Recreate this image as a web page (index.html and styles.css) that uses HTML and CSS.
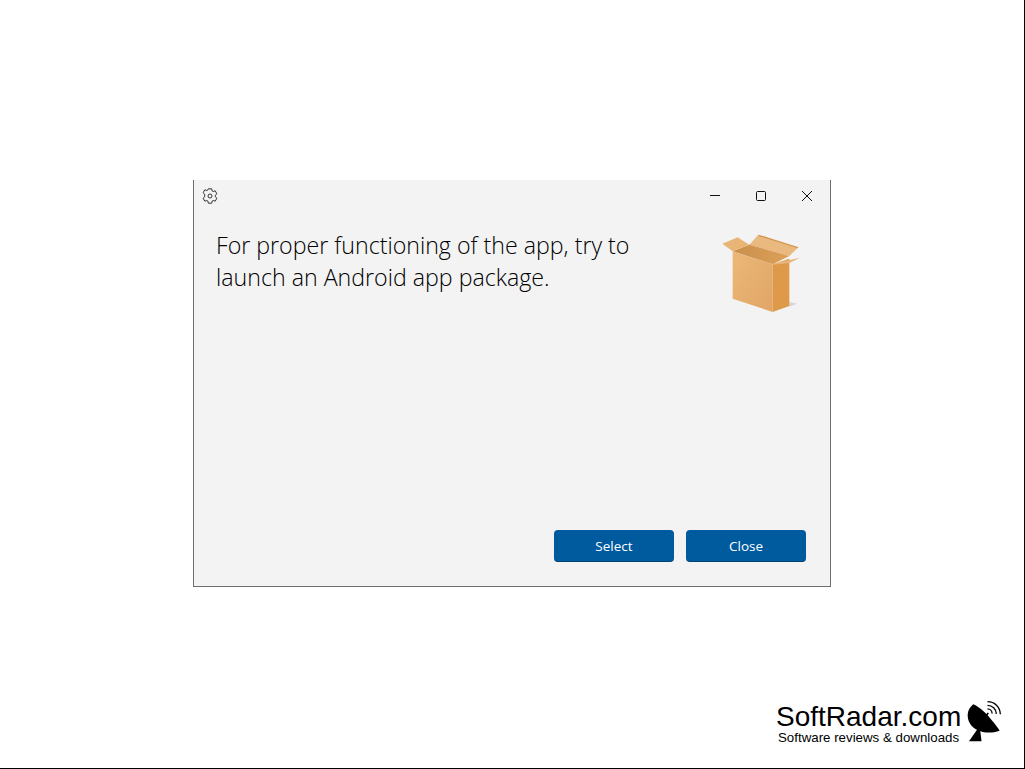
FILE: index.html
```html
<!DOCTYPE html>
<html lang="en">
<head>
    <meta charset="UTF-8">
    <meta name="viewport" content="width=device-width, initial-scale=1.0">
    <title>Android app package</title>
    <link rel="stylesheet" href="styles.css">
</head>
<body>

    <main class="screen">

        <section class="dialog">
            <div class="titlebar">
                <button type="button" class="icon-btn settings" aria-label="Settings">
                    <svg width="16" height="16" viewBox="0 0 16 16" fill="none" stroke="#333" stroke-width="1">
                        <circle cx="8" cy="8" r="2"/>
                        <path d="M6.300 .8h3.400l.4 2.100 1.100.6 2-.7 1.700 3-1.600 1.400v1.600l1.600 1.400-1.700 3-2-.7-1.100.6-.4 2.100H6.300l-.4-2.100-1.100-.6-2 .7-1.700-3 1.600-1.400V6.200L1.100 4.800l1.700-3 2 .7 1.100-.6z"/>
                    </svg>
                </button>
                <div class="window-controls">
                    <button type="button" class="icon-btn" aria-label="Minimize">
                        <svg width="12" height="12" viewBox="0 0 12 12" stroke="#111" stroke-width="1"><path d="M1 5.500h10"/></svg>
                    </button>
                    <button type="button" class="icon-btn" aria-label="Maximize">
                        <svg width="12" height="12" viewBox="0 0 12 12" fill="none" stroke="#111" stroke-width="1"><rect x="1.500" y="1.500" width="9" height="9" rx="1"/></svg>
                    </button>
                    <button type="button" class="icon-btn" aria-label="Close">
                        <svg width="12" height="12" viewBox="0 0 12 12" stroke="#111" stroke-width="1"><path d="M1 1l10 10M11 1L1 11"/></svg>
                    </button>
                </div>
            </div>

            <div class="content">
                <p class="message">For proper functioning of the app, try to launch an Android app package.</p>
                <svg class="box" width="84" height="84" viewBox="90 170 252 252">
                    <defs>
                        <linearGradient id="boxFront" x1="0" y1="0" x2="1" y2="1">
                            <stop offset="0" stop-color="#ecb878"/>
                            <stop offset="1" stop-color="#e0a566"/>
                        </linearGradient>
                        <linearGradient id="boxInside" x1="0" y1="0" x2="1" y2="0">
                            <stop offset="0" stop-color="#c98f4c"/>
                            <stop offset="1" stop-color="#dda058"/>
                        </linearGradient>
                    </defs>
                    <path d="M298 380l24 5-24 9z" fill="#d8d8d8"/>
                    <path d="M205 178l120 38-27 26-120-34z" fill="#e9b97f"/>
                    <path d="M205 178l120 38-1 3-118-37z" fill="#d0954f"/>
                    <path d="M128 228l50-20 120 34-50 25z" fill="url(#boxInside)"/>
                    <path d="M97 205l46-19 35 22-50 20z" fill="#e8b577"/>
                    <path d="M128 228l120 39v143l-120-40z" fill="url(#boxFront)"/>
                    <path d="M248 267l50-17v142l-50 18z" fill="#df9a49"/>
                    <path d="M248 265l82-18-32 16-50 5z" fill="#e8b67c"/>
                </svg>
            </div>

            <div class="actions">
                <button type="button" class="action-btn">Select</button>
                <button type="button" class="action-btn">Close</button>
            </div>
        </section>

        <footer class="brand">
            <div class="brand-text">
                <div class="brand-name">SoftRadar.com</div>
                <div class="brand-tag">Software reviews &amp; downloads</div>
            </div>
            <svg class="dish" width="38" height="43" viewBox="600 15 115 130">
                <path d="M625 28c-18 14-22 38-10 58 13 22 50 36 90 22-6-10-14-20-24-32-16-20-34-38-56-48z" fill="#000"/>
                <path d="M640 100l-28 40h38l-4-32z" fill="#000"/>
                <path d="M660 72l10-18" stroke="#000" stroke-width="5"/>
                <g fill="none" stroke="#000" stroke-width="4">
                    <path d="M668 42c8 0 14 6 14 14"/>
                    <path d="M668 31c15 0 26 11 27 26"/>
                    <path d="M668 20c22 0 38 16 39 38"/>
                </g>
            </svg>
        </footer>

    </main>

</body>
</html>
```

FILE: styles.css
```css
html, body {
    margin: 0;
    padding: 0;
    background-color: #fff;
}

.screen {
    width: 1025px;
    height: 769px;
    box-sizing: border-box;
    border-right: 1px solid #000;
    border-bottom: 1px solid #000;
    padding-top: 180px;
    display: flex;
    flex-direction: column;
    overflow: hidden;
}

.dialog {
    width: 638px;
    height: 407px;
    margin-left: 193px;
    box-sizing: border-box;
    background-color: #f3f3f3;
    border: 1px solid #6e6e6e;
    border-top: none;
    display: flex;
    flex-direction: column;
    font-family: 'Open Sans', sans-serif;
}

.titlebar {
    height: 32px;
    display: flex;
    justify-content: space-between;
    align-items: center;
    padding-left: 8px;
}

.window-controls {
    display: flex;
    gap: 34px;
    padding-right: 17px;
}

.icon-btn {
    background: none;
    border: none;
    padding: 0;
    display: flex;
}

.content {
    flex: 1;
    display: flex;
    justify-content: space-between;
    align-items: flex-start;
    padding: 17px 26px 0 22px;
}

.message {
    margin: 0;
    width: 440px;
    font-size: 23.2px;
    font-weight: 300;
    line-height: 32px;
    color: #000;
}

.box {
    margin-top: 3px;
}

.actions {
    display: flex;
    justify-content: flex-end;
    gap: 12px;
    padding: 0 24px 24px 0;
}

.action-btn {
    width: 120px;
    height: 32px;
    background-color: #005a9e;
    border: none;
    border-bottom: 1px solid #004275;
    border-radius: 4px;
    color: #fff;
    font-family: 'Open Sans', sans-serif;
    font-size: 13.500px;
    padding: 0;
}

.brand {
    margin-top: 113px;
    margin-left: 776px;
    display: flex;
    align-items: flex-start;
    gap: 4px;
    font-family: 'Liberation Sans', Arial, sans-serif;
    color: #000;
}

.brand-text {
    padding-top: 2px;
}

.brand-name {
    font-size: 28px;
    line-height: 30px;
}

.brand-tag {
    font-size: 13.300px;
    line-height: 12px;
    margin-left: 2px;
}
```
